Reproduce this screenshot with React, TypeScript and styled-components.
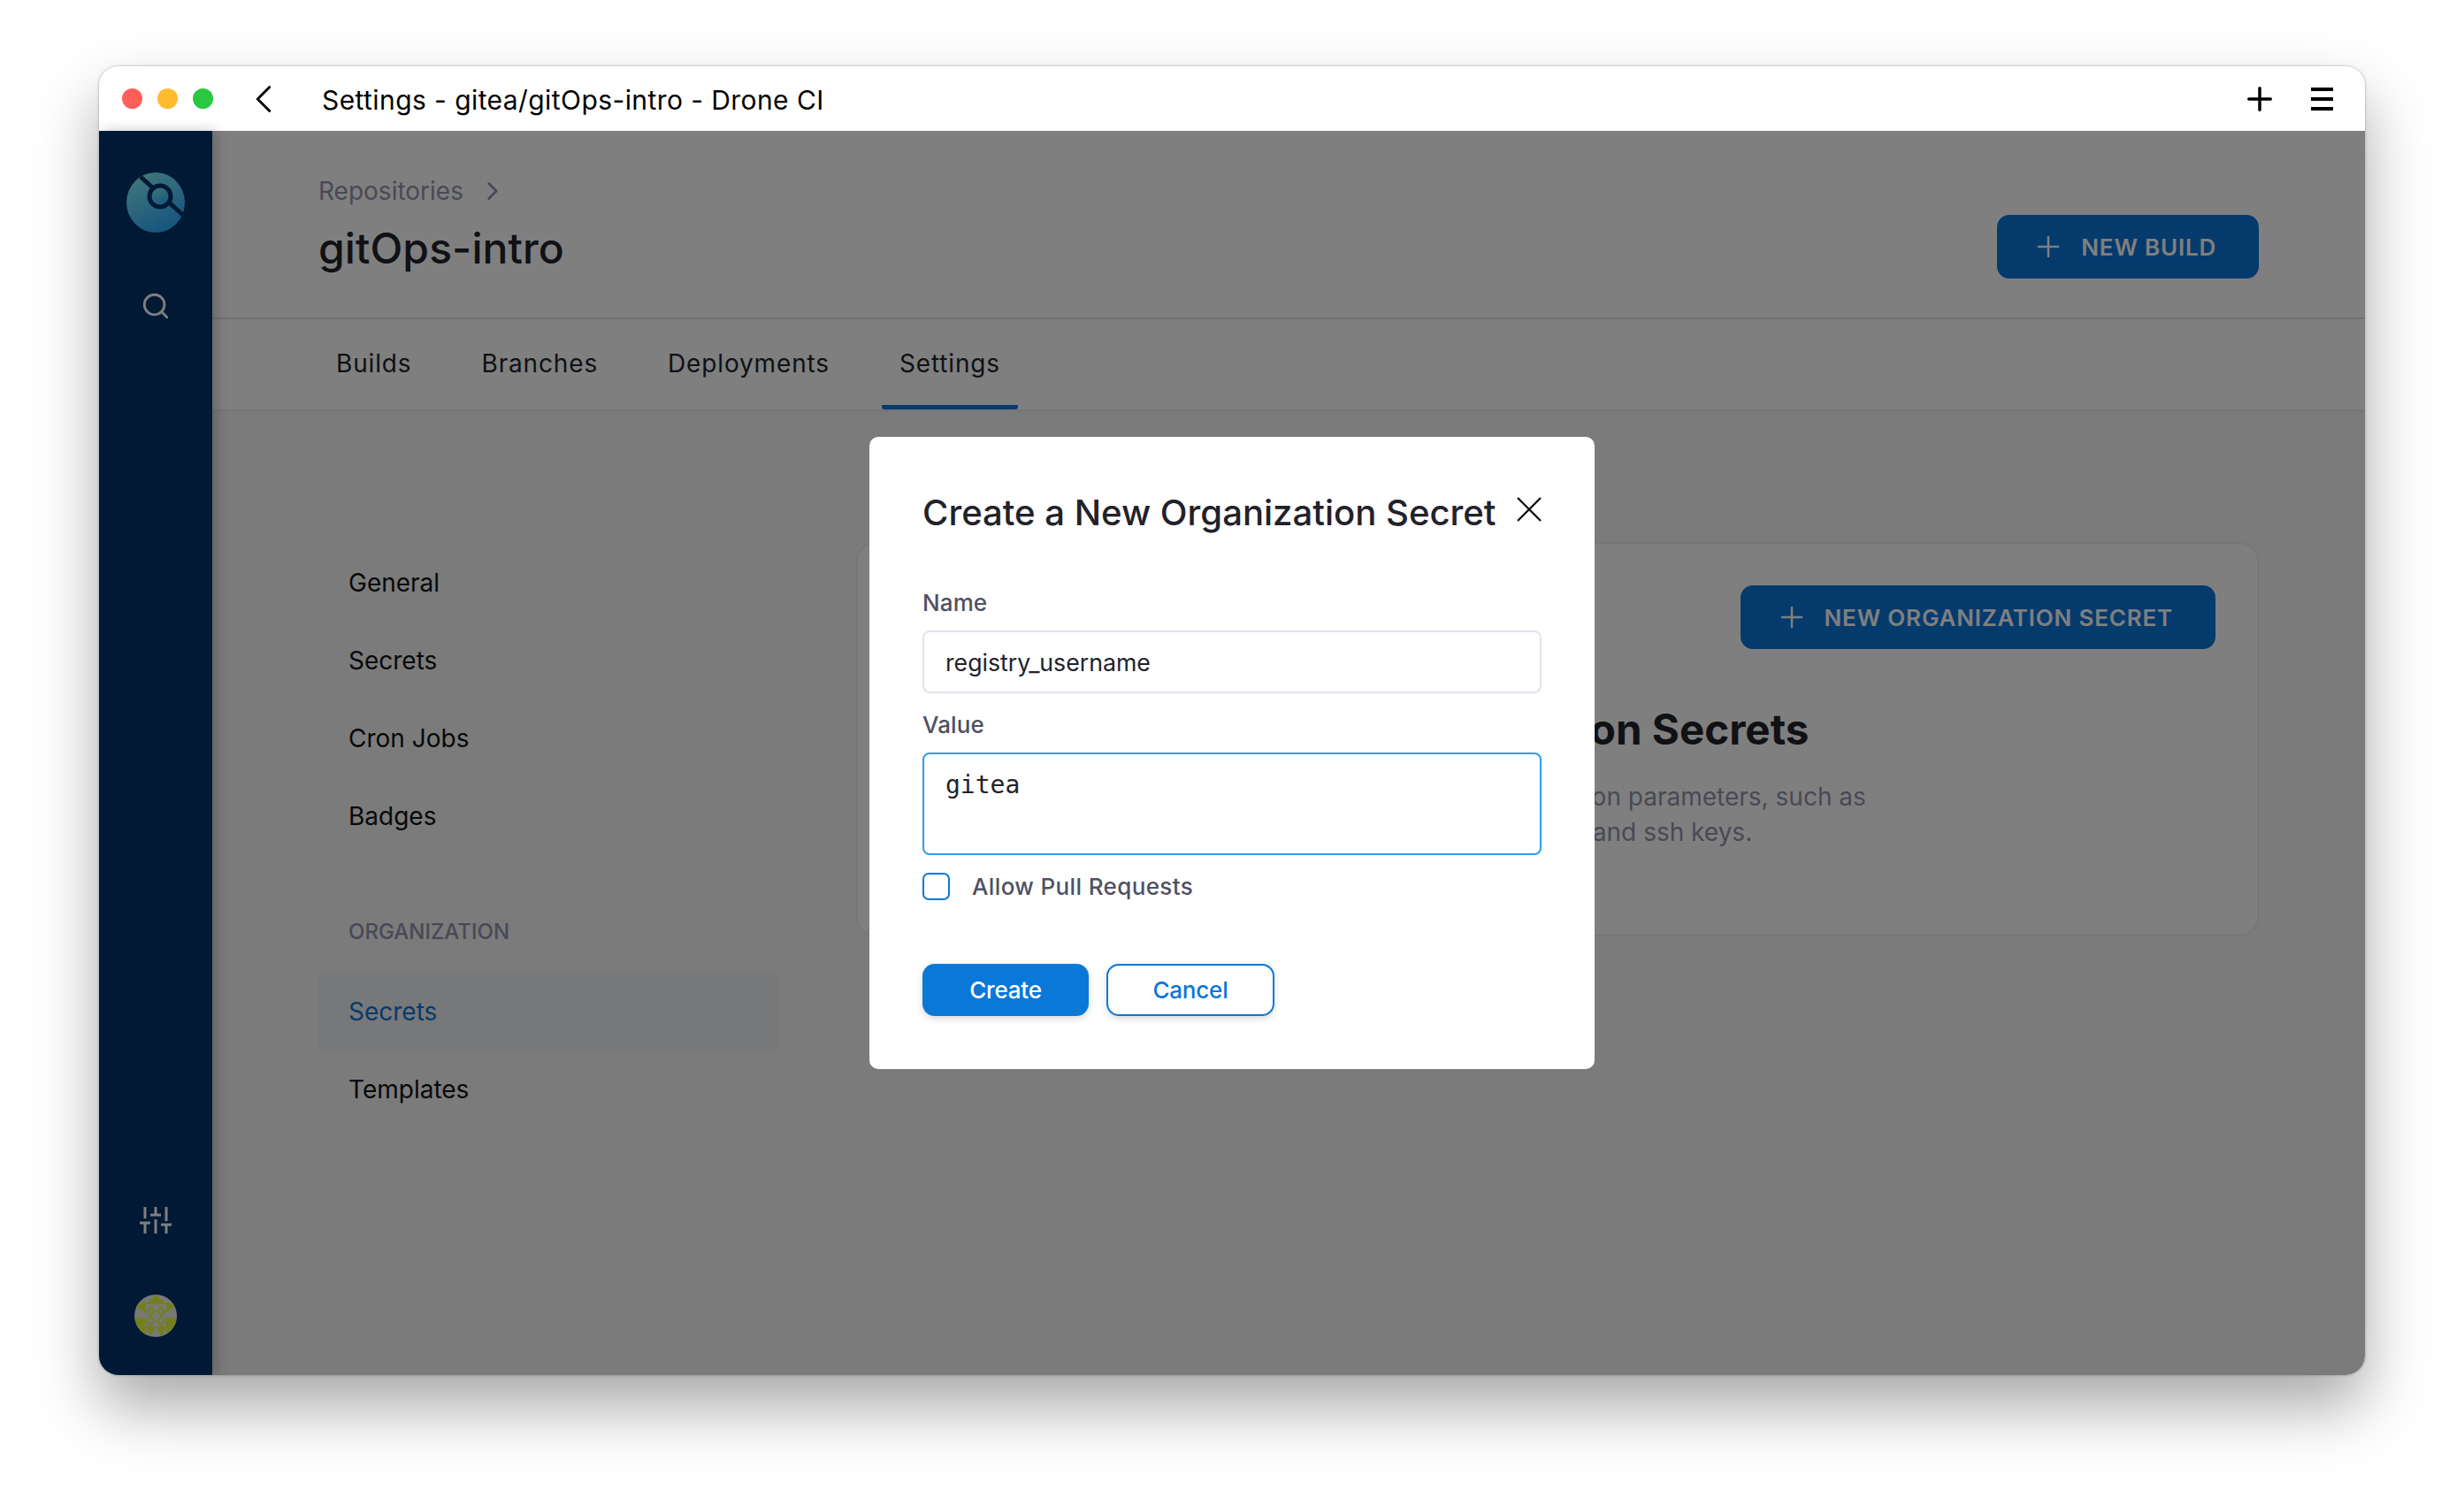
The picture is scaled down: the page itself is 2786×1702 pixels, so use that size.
import { FC } from "react";
import styled, { createGlobalStyle } from "styled-components";
import { ChevronLeft, ChevronRight, Plus, Search } from "lucide-react";

const GlobalStyle = createGlobalStyle`
  html, body {
    margin: 0;
    background: #fff;
  }
  * {
    box-sizing: border-box;
  }
`;

const settingsLinks = ["General", "Secrets", "Cron Jobs", "Badges"];
const tabs = ["Builds", "Branches", "Deployments", "Settings"];

const DroneLogo: FC = () => (
  <svg width="66" height="68" viewBox="0 0 66 68">
    <defs>
      <linearGradient id="droneFill" x1="0.2" y1="0" x2="0.7" y2="1">
        <stop offset="0" stopColor="#86eef2" />
        <stop offset="1" stopColor="#28a8ff" />
      </linearGradient>
    </defs>
    <ellipse cx="33" cy="34" rx="33" ry="34" fill="url(#droneFill)" />
    <path d="M16 5 L66 50" stroke="#04326a" strokeWidth="5" />
    <circle cx="38" cy="27" r="12" fill="url(#droneFill)" stroke="#04326a" strokeWidth="5" />
  </svg>
);

const SlidersIcon: FC = () => (
  <svg width="36" height="30" viewBox="0 0 36 30" fill="none" stroke="#fff" strokeWidth="3">
    <path d="M6 0V13M0 18H12M6 18V30" />
    <path d="M18 0V10M12 9H24M18 14V30" />
    <path d="M30 0V16M24 20H36M30 20V30" />
  </svg>
);

const Avatar: FC = () => (
  <svg width="48" height="48" viewBox="0 0 48 48">
    <defs>
      <clipPath id="avatarClip">
        <circle cx="24" cy="24" r="24" />
      </clipPath>
    </defs>
    <g clipPath="url(#avatarClip)">
      <rect width="48" height="48" fill="#f0f0f0" />
      <path d="M24 0L36 11H12Z" fill="#e6ff3c" />
      <path d="M0 13L12 8V20ZM48 13L36 8V20Z" fill="#e6ff3c" />
      <path d="M0 26H12V48H6ZM48 26H36V48H42Z" fill="#e6ff3c" />
      <path d="M12 36H24L18 48ZM24 36H36L30 48Z" fill="#e6ff3c" />
      <path
        d="M18 13L24 19L18 25L12 19ZM30 13L36 19L30 25L24 19ZM18 24L24 30L18 36L12 30ZM30 24L36 30L30 36L24 30Z"
        fill="#e6ff3c"
      />
      <path
        d="M18 16L21 19L18 22L15 19ZM30 16L33 19L30 22L27 19ZM18 27L21 30L18 33L15 30ZM30 27L33 30L30 33L27 30Z"
        fill="#f0f0f0"
      />
    </g>
  </svg>
);

const CloseIcon: FC = () => (
  <svg width="28" height="28" viewBox="0 0 28 28" fill="none" stroke="#111" strokeWidth="2.4">
    <path d="M1 1L27 27M27 1L1 27" />
  </svg>
);

const App: FC = () => {
  return (
    <Page>
      <GlobalStyle />
      <Window>
        <TitleBar>
          <Lights>
            <Light color="#ff5f57" />
            <Light color="#febc2e" />
            <Light color="#28c840" />
          </Lights>
          <BackButton>
            <ChevronLeft size={54} strokeWidth={1.3} />
          </BackButton>
          <PageTitle>Settings - gitea/gitOps-intro - Drone CI</PageTitle>
          <TitleActions>
            <Plus size={42} strokeWidth={2} color="#000" />
            <Hamburger>
              <span />
              <span />
              <span />
            </Hamburger>
          </TitleActions>
        </TitleBar>
        <Shell>
          <Sidebar>
            <SideTop>
              <DroneLogo />
              <Search size={34} strokeWidth={2} color="#fff" />
            </SideTop>
            <SideBottom>
              <SlidersIcon />
              <Avatar />
            </SideBottom>
          </Sidebar>
          <Main>
            <Header>
              <div>
                <Breadcrumb>
                  Repositories
                  <ChevronRight size={34} strokeWidth={2} />
                </Breadcrumb>
                <RepoName>gitOps-intro</RepoName>
              </div>
              <PrimaryButton>
                <Plus size={38} strokeWidth={1.6} />
                NEW BUILD
              </PrimaryButton>
            </Header>
            <Tabs>
              {tabs.map((tab) => (
                <Tab key={tab} active={tab === "Settings"}>
                  {tab}
                </Tab>
              ))}
            </Tabs>
            <Body>
              <SettingsNav>
                {settingsLinks.map((link) => (
                  <NavItem key={link}>{link}</NavItem>
                ))}
                <NavHeading>ORGANIZATION</NavHeading>
                <NavItem active>Secrets</NavItem>
                <NavItem>Templates</NavItem>
              </SettingsNav>
              <Card>
                <CardActions>
                  <PrimaryButton>
                    <Plus size={38} strokeWidth={1.6} />
                    NEW ORGANIZATION SECRET
                  </PrimaryButton>
                </CardActions>
                <CardCopy>
                  <CardTitle>Organization Secrets</CardTitle>
                  <CardText>
                    Secrets for production parameters, such as
                    <br />
                    passwords, tokens, and ssh keys.
                  </CardText>
                </CardCopy>
              </Card>
            </Body>
          </Main>
          <Overlay>
            <Modal>
              <ModalHeader>
                <ModalTitle>Create a New Organization Secret</ModalTitle>
                <CloseSlot>
                  <CloseIcon />
                </CloseSlot>
              </ModalHeader>
              <FieldLabel>Name</FieldLabel>
              <TextInput readOnly value="registry_username" />
              <FieldLabel>Value</FieldLabel>
              <ValueArea readOnly value="gitea" />
              <CheckRow>
                <CheckBox />
                Allow Pull Requests
              </CheckRow>
              <ModalActions>
                <CreateButton>Create</CreateButton>
                <CancelButton>Cancel</CancelButton>
              </ModalActions>
            </Modal>
          </Overlay>
        </Shell>
      </Window>
    </Page>
  );
};

const Page = styled.div`
  width: 2786px;
  height: 1702px;
  padding: 75px 112px 0;
  font-family: Inter, "Liberation Sans", sans-serif;
  overflow: hidden;
`;

const Window = styled.div`
  width: 2562px;
  height: 1480px;
  display: flex;
  flex-direction: column;
  border-radius: 22px;
  overflow: hidden;
  box-shadow: 0 36px 70px rgba(0, 0, 0, 0.34), 0 0 3px rgba(0, 0, 0, 0.35);
`;

const TitleBar = styled.div`
  height: 73px;
  flex: none;
  display: flex;
  align-items: center;
  padding: 0 36px 0 26px;
  background: #fff;
  color: #000;
`;

const Lights = styled.div`
  display: flex;
  gap: 17px;
`;

const Light = styled.span<{ color: string }>`
  width: 23px;
  height: 23px;
  border-radius: 50%;
  background: ${(p) => p.color};
`;

const BackButton = styled.div`
  display: flex;
  margin-left: 30px;
`;

const PageTitle = styled.div`
  margin-left: 39px;
  padding-top: 2px;
  font-size: 30px;
  letter-spacing: 0.42px;
`;

const TitleActions = styled.div`
  margin-left: auto;
  display: flex;
  align-items: center;
  gap: 37px;
`;

const Hamburger = styled.div`
  width: 25px;
  height: 26px;
  display: flex;
  flex-direction: column;
  justify-content: space-between;

  span {
    height: 4px;
    background: #000;
  }
`;

const Shell = styled.div`
  position: relative;
  flex: 1;
  display: flex;
  min-height: 0;
`;

const Sidebar = styled.aside`
  position: relative;
  z-index: 1;
  width: 128px;
  flex: none;
  display: flex;
  flex-direction: column;
  justify-content: space-between;
  align-items: center;
  padding: 47px 0 43px;
  background: #04326a;
  box-shadow: 4px 0 14px rgba(0, 0, 0, 0.22);
`;

const SideTop = styled.div`
  display: flex;
  flex-direction: column;
  align-items: center;
  gap: 66px;
`;

const SideBottom = styled.div`
  display: flex;
  flex-direction: column;
  align-items: center;
  gap: 69px;
`;

const Main = styled.main`
  flex: 1;
  min-width: 0;
  display: flex;
  flex-direction: column;
  background: #f6f6f8;
`;

const Header = styled.header`
  height: 213px;
  flex: none;
  display: flex;
  justify-content: space-between;
  align-items: flex-start;
  padding: 50px 120px 0 120px;
  background: #fff;
  border-bottom: 2px solid #e4e4ea;

  & > button {
    margin-top: 45px;
  }
`;

const Breadcrumb = styled.div`
  display: flex;
  align-items: center;
  gap: 16px;
  height: 36px;
  font-size: 28px;
  color: #9293ab;
`;

const RepoName = styled.h1`
  margin: 15px 0 0;
  font-size: 48px;
  line-height: 64px;
  font-weight: 500;
  letter-spacing: 0.1px;
  color: #22222a;
`;

const PrimaryButton = styled.button`
  height: 72px;
  display: inline-flex;
  align-items: center;
  gap: 18px;
  padding: 0 48px 0 39px;
  border: none;
  border-radius: 14px;
  background: #0a74da;
  color: #fff;
  font-family: inherit;
  font-size: 26px;
  font-weight: 600;
  letter-spacing: 0.8px;
`;

const Tabs = styled.nav`
  height: 102px;
  flex: none;
  display: flex;
  gap: 39px;
  padding-left: 120px;
  background: #fff;
  box-shadow: 0 2px 6px rgba(0, 0, 0, 0.06);
`;

const Tab = styled.div<{ active?: boolean }>`
  display: flex;
  align-items: center;
  padding: 2px 20px 0;
  font-size: 28px;
  letter-spacing: 0.85px;
  color: #22222a;
  border-bottom: 5px solid ${(p) => (p.active ? "#0a74da" : "transparent")};
  border-radius: 0 0 3px 3px;
`;

const Body = styled.div`
  flex: 1;
  display: flex;
  gap: 88px;
  padding: 150px 120px 0 120px;
`;

const SettingsNav = styled.div`
  width: 520px;
  flex: none;
  display: flex;
  flex-direction: column;
  padding-top: 2px;
`;

const NavItem = styled.div<{ active?: boolean }>`
  height: 88px;
  display: flex;
  align-items: center;
  padding-left: 34px;
  border-radius: 8px;
  font-size: 28px;
  color: ${(p) => (p.active ? "#0a74da" : "#111")};
  background: ${(p) => (p.active ? "#eff0f3" : "transparent")};
`;

const NavHeading = styled.div`
  margin-top: 48px;
  height: 85px;
  padding: 24px 0 0 34px;
  font-size: 24px;
  font-weight: 500;
  color: #9293ab;
`;

const Card = styled.section`
  flex: 1;
  height: 446px;
  padding: 47px 47px 0;
  border: 2px solid #eeeef2;
  border-radius: 22px;
  background: #fff;
`;

const CardActions = styled.div`
  display: flex;
  justify-content: flex-end;
`;

const CardCopy = styled.div`
  margin: 61px 0 0 520px;
`;

const CardTitle = styled.h2`
  margin: 0;
  padding-left: 21px;
  font-size: 47.5px;
  line-height: 60px;
  font-weight: 700;
  color: #22222a;
`;

const CardText = styled.p`
  margin: 26px 0 0;
  font-size: 28px;
  line-height: 40px;
  color: #9293ab;
`;

const Overlay = styled.div`
  position: absolute;
  inset: 0;
  z-index: 2;
  display: flex;
  justify-content: center;
  align-items: flex-start;
  padding-top: 346px;
  background: rgba(0, 0, 0, 0.5);
`;

const Modal = styled.div`
  width: 820px;
  height: 715px;
  padding: 60px;
  display: flex;
  flex-direction: column;
  border-radius: 10px;
  background: #fff;
`;

const ModalHeader = styled.div`
  display: flex;
  justify-content: space-between;
  align-items: flex-start;
  height: 50px;
  margin-bottom: 61px;
`;

const ModalTitle = styled.h3`
  margin: 0;
  font-size: 40.1px;
  line-height: 52px;
  font-weight: 500;
  color: #22222a;
`;

const CloseSlot = styled.div`
  display: flex;
  margin-top: 8px;
`;

const FieldLabel = styled.label`
  height: 32px;
  font-size: 26px;
  line-height: 34px;
  font-weight: 500;
  letter-spacing: 0.1px;
  color: #4f5162;
  margin-bottom: 16px;
`;

const TextInput = styled.input`
  width: 100%;
  height: 71px;
  flex: none;
  padding: 0 24px;
  margin-bottom: 19px;
  border: 2px solid #e4e4ec;
  border-radius: 8px;
  outline: none;
  font-family: inherit;
  font-size: 26.7px;
  color: #22222a;
`;

const ValueArea = styled.textarea`
  width: 100%;
  height: 116px;
  flex: none;
  padding: 17px 24px;
  margin: 0 0 20px;
  border: 2px solid #2a9df4;
  border-radius: 8px;
  outline: none;
  resize: none;
  font-family: "DejaVu Sans Mono", "Liberation Mono", monospace;
  font-size: 28px;
  line-height: 36px;
  color: #22222a;
`;

const CheckRow = styled.div`
  display: flex;
  align-items: center;
  gap: 25px;
  height: 31px;
  font-size: 26px;
  font-weight: 500;
  letter-spacing: 0.37px;
  color: #4f5162;
`;

const CheckBox = styled.span`
  width: 31px;
  height: 31px;
  border: 2px solid #0a78d7;
  border-radius: 7px;
`;

const ModalActions = styled.div`
  display: flex;
  gap: 20px;
  margin-top: 72px;
`;

const CreateButton = styled.button`
  width: 188px;
  height: 59px;
  border: none;
  border-radius: 14px;
  background: #0a78d7;
  color: #fff;
  font-family: inherit;
  font-size: 26px;
  font-weight: 500;
  letter-spacing: -0.2px;
  box-shadow: 0 3px 8px rgba(0, 0, 0, 0.15);
`;

const CancelButton = styled(CreateButton)`
  width: 190px;
  background: #fff;
  border: 2px solid #0a78d7;
  color: #0a78d7;
`;

export default App;
